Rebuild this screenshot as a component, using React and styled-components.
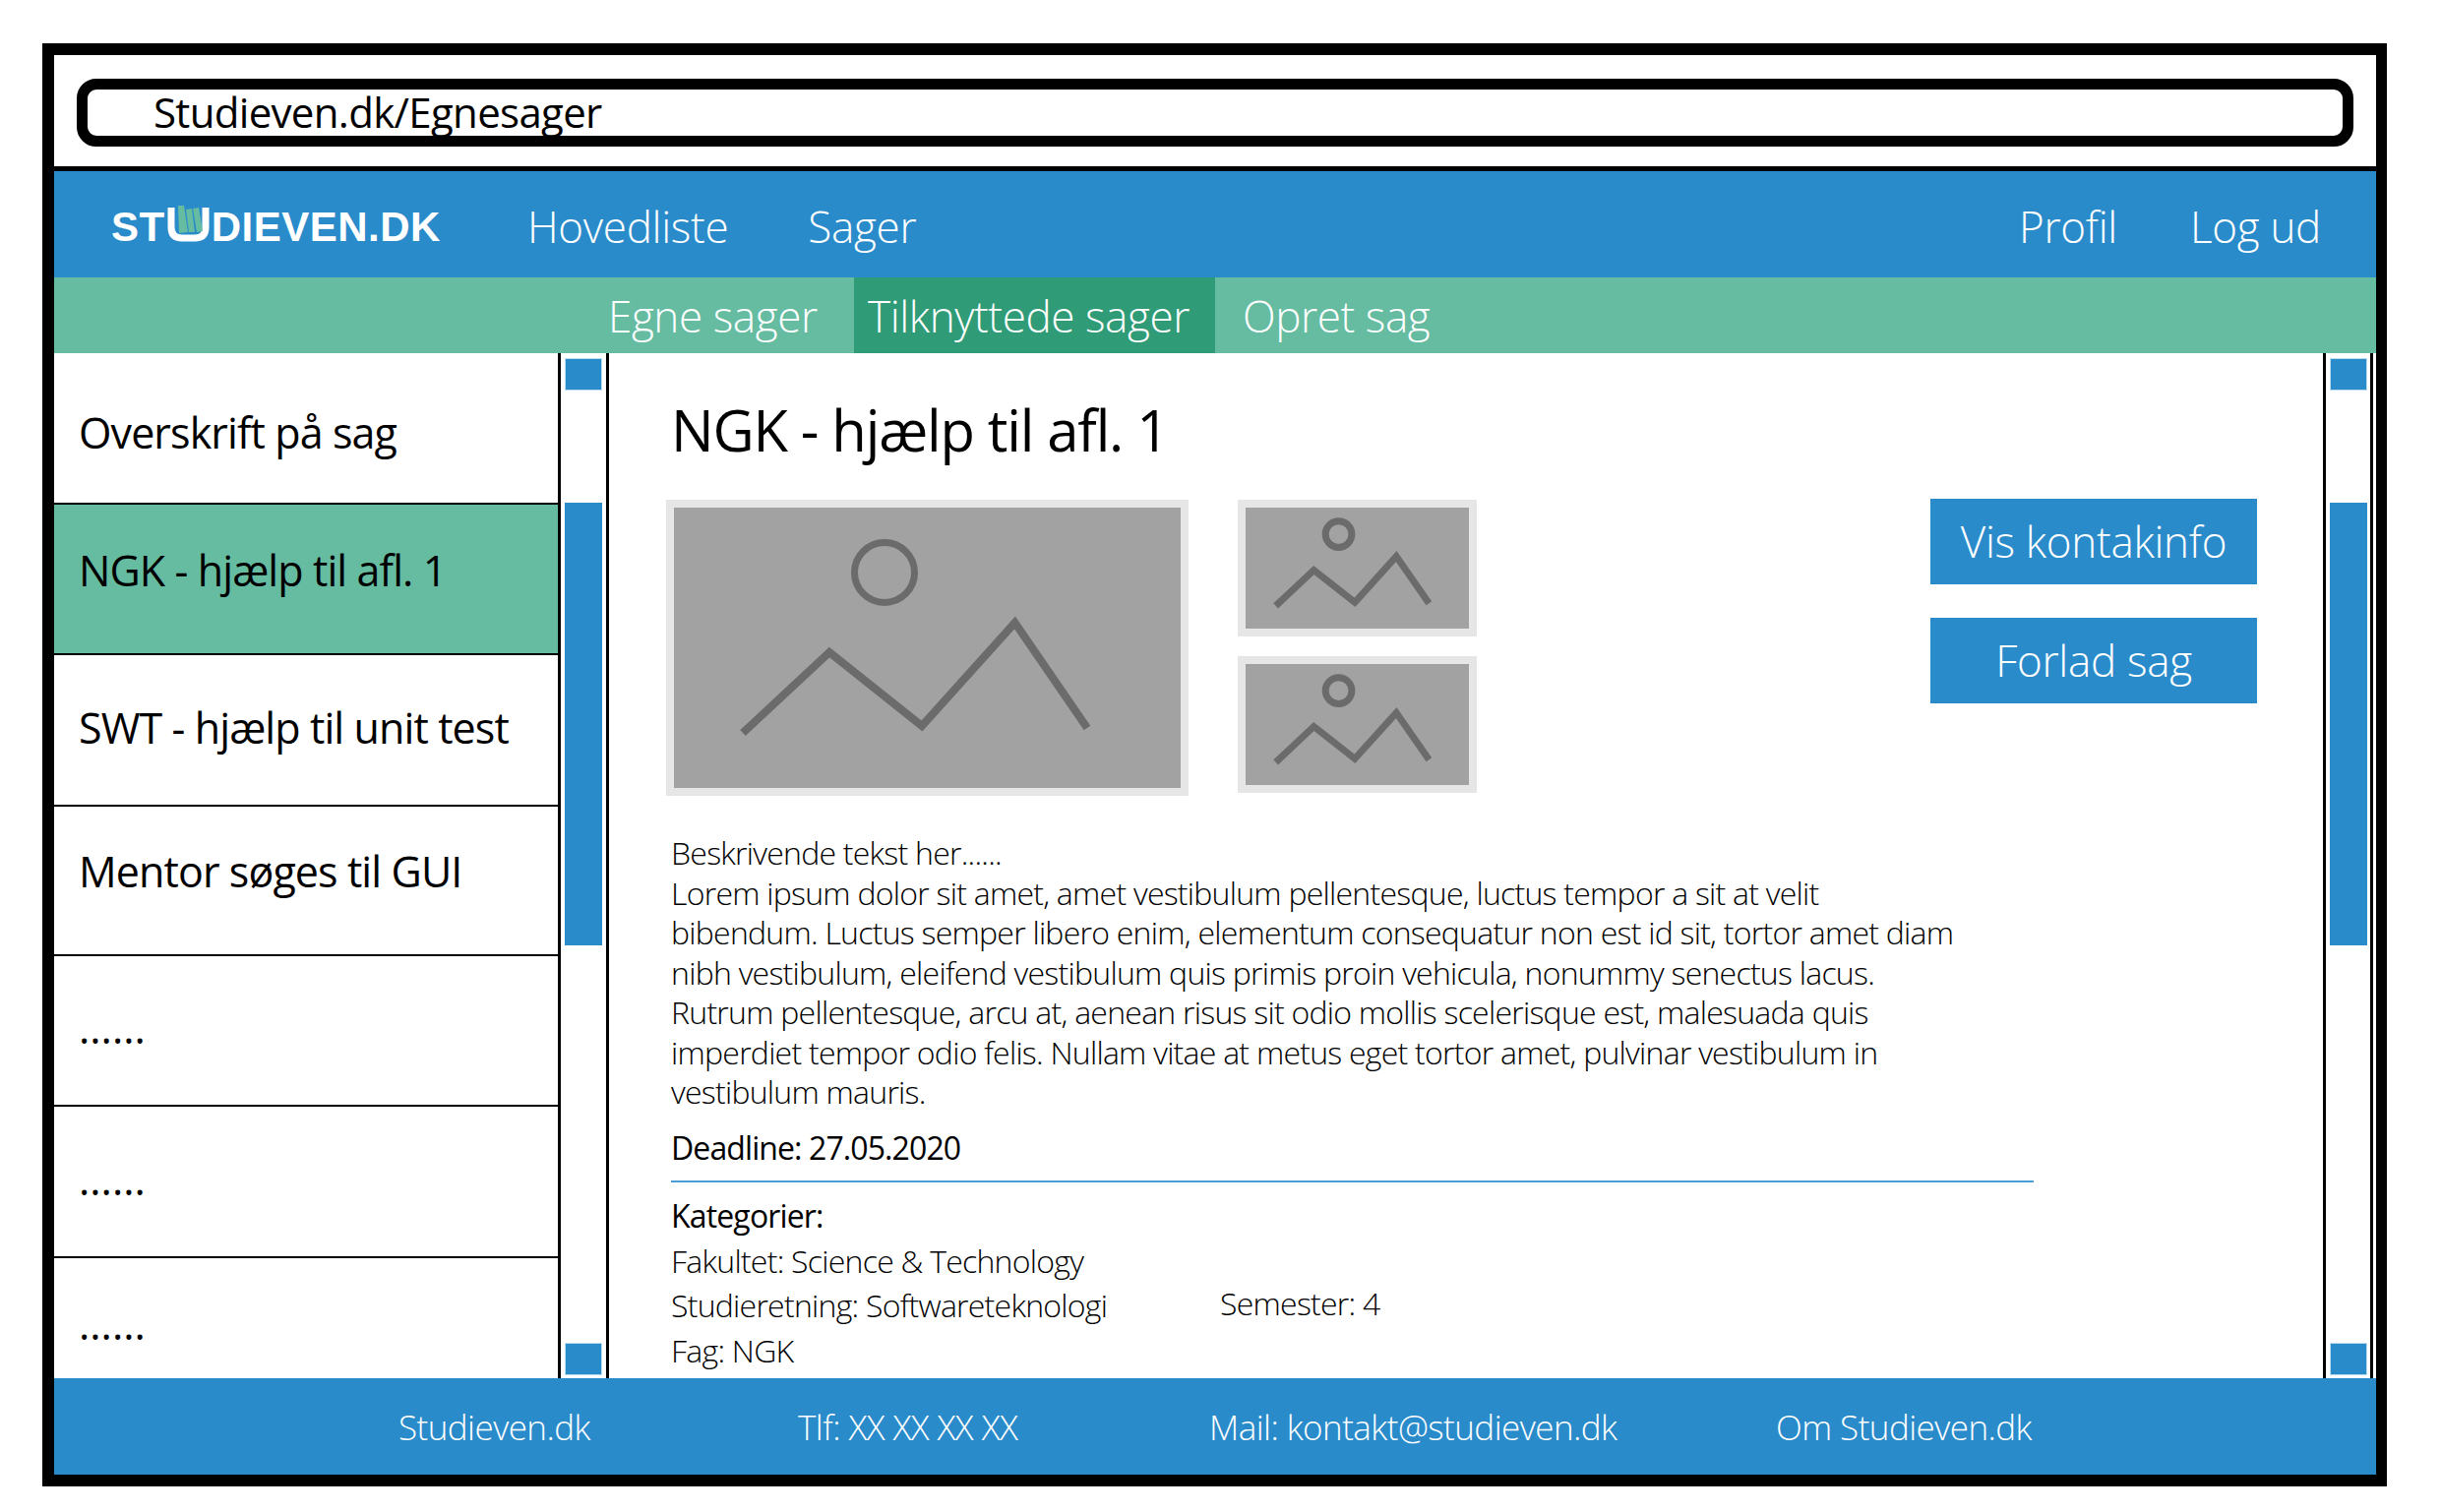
import React from 'react';
import styled, { createGlobalStyle } from 'styled-components';

const sans = `"Open Sans", "Noto Sans", sans-serif`;
const blue = '#2a8bcb';
const green = '#65bca1';

const GlobalStyle = createGlobalStyle`
  html, body { margin: 0; padding: 0; background: #fff; }
  * { box-sizing: border-box; }
`;

const Page = styled.div`
  width: 2481px;
  height: 1537px;
  padding: 44px 55px 26px 43px;
  font-family: ${sans};
  overflow: hidden;
`;

const Frame = styled.div`
  width: 2383px;
  height: 1467px;
  border: 12px solid #000;
  border-right-width: 11px;
  display: flex;
  flex-direction: column;
  background: #fff;
`;

const BrowserBar = styled.div`
  height: 118px;
  flex: none;
  padding: 24px 23px 0 23px;
  border-bottom: 5px solid #000;
`;

const UrlField = styled.div`
  height: 69px;
  border: 11px solid #000;
  border-radius: 20px;
  padding-left: 67px;
  font-size: 42px;
  line-height: 46px;
  color: #000;
  letter-spacing: -0.68px;
  white-space: nowrap;
`;

const TopNav = styled.nav`
  height: 108px;
  flex: none;
  background: ${blue};
  display: flex;
  align-items: center;
  padding: 4px 56px 0 58px;
  color: #fff;
`;

const Logo = styled.div`
  display: flex;
  align-items: center;
  width: 423px;
  font-family: "Liberation Sans", sans-serif;
  font-weight: 700;
  font-size: 42px;
  letter-spacing: 0.5px;
  margin-top: 1px;
`;

const NavLink = styled.a`
  font-size: 44px;
  font-weight: 300;
  margin-right: ${p => p.$gap || 0}px;
  letter-spacing: -0.3px;
`;

const Spacer = styled.div`
  flex: 1;
`;

const SubNav = styled.nav`
  height: 77px;
  flex: none;
  background: ${green};
  display: flex;
  padding-left: 549px;
`;

const SubTab = styled.a`
  display: flex;
  align-items: center;
  width: ${p => p.$w}px;
  height: 100%;
  padding-left: ${p => p.$pad}px;
  font-size: 44px;
  font-weight: 300;
  letter-spacing: -0.4px;
  color: #fff;
  background: ${p => (p.$active ? '#2f9b77' : 'transparent')};
`;

const Workspace = styled.div`
  flex: 1;
  min-height: 0;
  display: flex;
`;

const CaseList = styled.aside`
  width: 512px;
  flex: none;
  display: flex;
  flex-direction: column;
  overflow: hidden;
`;

const CaseRow = styled.div`
  height: ${p => p.$h || 153}px;
  flex: none;
  display: flex;
  align-items: center;
  padding-left: 25px;
  padding-top: ${p => Math.max(p.$shift || 0, 0) * 2}px;
  padding-bottom: ${p => Math.max(-(p.$shift || 0), 0) * 2}px;
  font-size: 43px;
  letter-spacing: ${p => (p.$dots ? 0 : -0.9)}px;
  color: #000;
  background: ${p => (p.$active ? green : '#fff')};
  border-bottom: ${p => (p.$last ? 0 : 2)}px solid #000;
`;

const Scrollbar = styled.div`
  width: ${p => p.$wide}px;
  flex: none;
  display: flex;
  flex-direction: column;
  padding: 5px ${p => p.$right}px 3px 4px;
  margin-right: ${p => p.$outer || 0}px;
  border-left: 3px solid #000;
  border-right: 3px solid #000;
`;

const ScrollEnd = styled.div`
  height: 33px;
  flex: none;
  background: ${blue};
  outline: 1px solid #bcdcf0;
  outline-offset: -1px;
`;

const ScrollThumb = styled.div`
  height: 450px;
  flex: none;
  margin-top: 114px;
  margin-bottom: auto;
  background: ${blue};
`;

const Main = styled.main`
  flex: 1;
  min-width: 0;
  padding: 0 0 0 63px;
  overflow: hidden;
`;

const Title = styled.h1`
  margin: 42px 0 0;
  font-size: 58px;
  line-height: 72px;
  font-weight: 400;
  letter-spacing: -1.15px;
  color: #000;
`;

const MediaRow = styled.div`
  display: flex;
  margin: 35px 0 0 -5px;
  height: 301px;
`;

const ThumbColumn = styled.div`
  display: flex;
  flex-direction: column;
  gap: 20px;
  margin-left: 50px;
`;

const Picture = styled.svg`
  display: block;
  flex: none;
  border: 8px solid #e6e6e6;
  background: #a2a2a2;
`;

const Actions = styled.div`
  display: flex;
  flex-direction: column;
  gap: 34px;
  margin-left: 461px;
  margin-top: -1px;
`;

const ActionButton = styled.button`
  width: 332px;
  height: 87px;
  border: 0;
  padding: 0 0 2px;
  background: ${blue};
  color: #fff;
  font-family: ${sans};
  font-size: 44px;
  font-weight: 300;
  letter-spacing: -0.3px;
`;

const Description = styled.p`
  margin: 38px 0 0;
  font-size: 32px;
  line-height: 40.5px;
  font-weight: 300;
  letter-spacing: -0.75px;
  white-space: nowrap;
  color: #000;
`;

const Deadline = styled.div`
  margin-top: 16px;
  font-size: 32px;
  line-height: 40px;
  letter-spacing: -0.9px;
  color: #000;
`;

const Rule = styled.hr`
  width: 1385px;
  height: 2px;
  border: 0;
  margin: 13px 0 0;
  background: #4c9fd6;
`;

const CategoryHeading = styled.div`
  margin-top: 14px;
  font-size: 32px;
  line-height: 40px;
  letter-spacing: -0.85px;
  color: #000;
`;

const CategoryGrid = styled.div`
  display: grid;
  grid-template-columns: 558px auto;
  grid-auto-rows: 45.5px;
  margin-top: 3px;
  font-size: 32px;
  font-weight: 300;
  letter-spacing: -0.75px;
  color: #000;
  align-items: center;
  justify-content: start;
`;

const SemesterCell = styled.div`
  margin-top: -5px;
`;

const FullCell = styled.div`
  grid-column: 1 / -1;
`;

const Footer = styled.footer`
  height: 98px;
  flex: none;
  background: ${blue};
  display: flex;
  align-items: center;
  padding-left: 350px;
  color: #fff;
  font-size: 35px;
  font-weight: 300;
  letter-spacing: -0.55px;
`;

const FooterItem = styled.span`
  width: ${p => p.$w}px;
  flex: none;
`;

const LogoU = () => (
  <svg width="43" height="38" viewBox="0 0 43 38" style={{ margin: '-6px 2px 0 2px' }}>
    <path d="M4 2 V22 Q4 33 15 33 H28 Q39 33 39 22 V2" fill="none" stroke="#fff" strokeWidth="7" />
    <path d="M11 0 L17 0 L21 27 L12 28 Z M19 4 L25 3 L28 27 L22 27 Z M26 3 L32 2 L36 26 L30 27 Z" fill={green} />
  </svg>
);

const BigPicture = () => (
  <Picture width="531" height="301" viewBox="0 0 515 285">
    <circle cx="214" cy="66" r="30.5" fill="none" stroke="#6b6b6b" strokeWidth="7" />
    <path d="M70 229 L158 147 L252 222 L346.5 117 L420 224" fill="none" stroke="#6b6b6b" strokeWidth="8" strokeLinejoin="miter" />
  </Picture>
);

const SmallPicture = ({ height }) => (
  <Picture width="243" height={height} viewBox="0 0 227 124">
    <circle cx="94.4" cy="27.3" r="13.5" fill="none" stroke="#6b6b6b" strokeWidth="7" />
    <path d="M30 100.7 L69 64 L111 97 L153.5 50 L187 98" fill="none" stroke="#6b6b6b" strokeWidth="7" strokeLinejoin="miter" />
  </Picture>
);

const cases = [
  { text: 'Overskrift på sag', h: 154, shift: 4 },
  { text: 'NGK - hjælp til afl. 1', h: 153, active: true, shift: -9 },
  { text: 'SWT - hjælp til unit test', h: 154, shift: -3 },
  { text: 'Mentor søges til GUI', h: 152, shift: -10 },
  { text: '......', h: 153, dots: true, shift: -3 },
  { text: '......', h: 154, dots: true, shift: -3 },
  { text: '......', h: 123, dots: true, last: true, shift: 5 },
];

function App() {
  return (
    <Page>
      <GlobalStyle />
      <Frame>
        <BrowserBar>
          <UrlField>Studieven.dk/Egnesager</UrlField>
        </BrowserBar>

        <TopNav>
          <Logo>ST<LogoU />DIEVEN.DK</Logo>
          <NavLink $gap={81}>Hovedliste</NavLink>
          <NavLink>Sager</NavLink>
          <Spacer />
          <NavLink $gap={74}>Profil</NavLink>
          <NavLink>Log ud</NavLink>
        </TopNav>

        <SubNav>
          <SubTab $w={264} $pad={14}>Egne sager</SubTab>
          <SubTab $w={367} $pad={14} $active>Tilknyttede sager</SubTab>
          <SubTab $w={230} $pad={28}>Opret sag</SubTab>
        </SubNav>

        <Workspace>
          <CaseList>
            {cases.map((c, i) => (
              <CaseRow key={i} $h={c.h} $active={c.active} $last={c.last} $shift={c.shift} $dots={c.dots}>{c.text}</CaseRow>
            ))}
          </CaseList>

          <Scrollbar $wide={52} $right={4}>
            <ScrollEnd />
            <ScrollThumb />
            <ScrollEnd />
          </Scrollbar>

          <Main>
            <Title>NGK - hjælp til afl. 1</Title>
            <MediaRow>
              <BigPicture />
              <ThumbColumn>
                <SmallPicture height={139} />
                <SmallPicture height={139} />
              </ThumbColumn>
              <Actions>
                <ActionButton>Vis kontakinfo</ActionButton>
                <ActionButton>Forlad sag</ActionButton>
              </Actions>
            </MediaRow>
            <Description>
              Beskrivende tekst her......<br />
              Lorem ipsum dolor sit amet, amet vestibulum pellentesque, luctus tempor a sit at velit<br />
              bibendum. Luctus semper libero enim, elementum consequatur non est id sit, tortor amet diam<br />
              nibh vestibulum, eleifend vestibulum quis primis proin vehicula, nonummy senectus lacus.<br />
              Rutrum pellentesque, arcu at, aenean risus sit odio mollis scelerisque est, malesuada quis<br />
              imperdiet tempor odio felis. Nullam vitae at metus eget tortor amet, pulvinar vestibulum in<br />
              vestibulum mauris.
            </Description>
            <Deadline>Deadline: 27.05.2020</Deadline>
            <Rule />
            <CategoryHeading>Kategorier:</CategoryHeading>
            <CategoryGrid>
              <FullCell>Fakultet: Science &amp; Technology</FullCell>
              <div>Studieretning: Softwareteknologi</div>
              <SemesterCell>Semester: 4</SemesterCell>
              <FullCell>Fag: NGK</FullCell>
            </CategoryGrid>
          </Main>

          <Scrollbar $wide={51} $right={3} $outer={3}>
            <ScrollEnd />
            <ScrollThumb />
            <ScrollEnd />
          </Scrollbar>
        </Workspace>

        <Footer>
          <FooterItem $w={406}>Studieven.dk</FooterItem>
          <FooterItem $w={418}>Tlf: XX XX XX XX</FooterItem>
          <FooterItem $w={576}>Mail: kontakt@studieven.dk</FooterItem>
          <FooterItem $w={300}>Om Studieven.dk</FooterItem>
        </Footer>
      </Frame>
    </Page>
  );
}

export default App;
